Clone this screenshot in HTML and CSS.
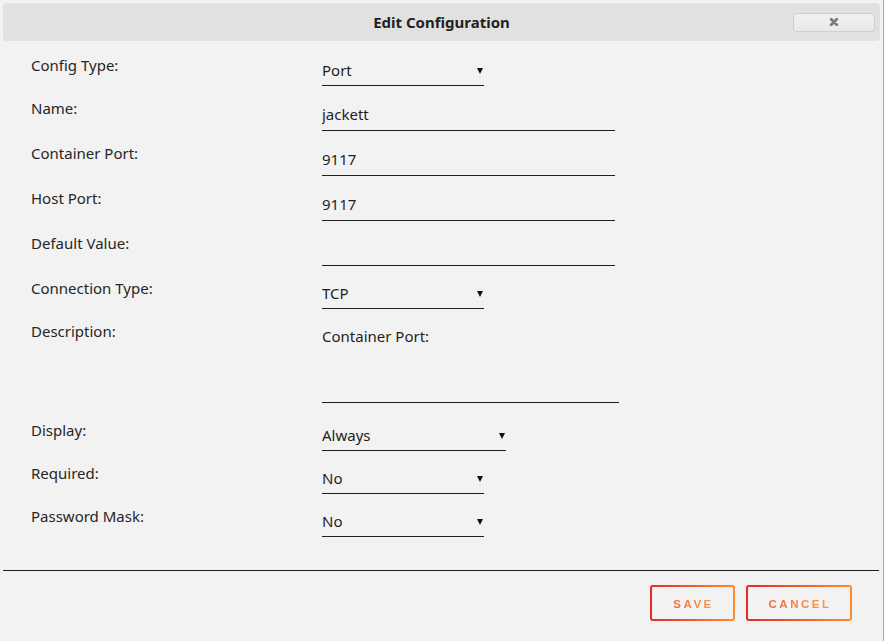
FILE: index.html
```html
<!DOCTYPE html>
<html lang="en">
<head>
    <meta charset="UTF-8">
    <meta name="viewport" content="width=device-width, initial-scale=1.0">
    <title>Edit Configuration</title>
    <link rel="stylesheet" href="styles.css">
</head>
<body>

    <div class="dialog">
        <header class="dialog-title">
            <h1>Edit Configuration</h1>
            <button class="close-btn" type="button">
                <svg width="10" height="10" viewBox="0 0 10 10">
                    <path d="M2.2 2.2 L7.8 7.8 M7.8 2.2 L2.2 7.8" stroke="#7a7a7a" stroke-width="2.8" stroke-linecap="round"/>
                </svg>
            </button>
        </header>

        <form class="config-form">
            <div class="row">
                <label>Config Type:</label>
                <div class="select-wrap short"><select><option>Port</option></select></div>
            </div>
            <div class="row">
                <label>Name:</label>
                <input type="text" value="jackett">
            </div>
            <div class="row">
                <label>Container Port:</label>
                <input type="text" value="9117">
            </div>
            <div class="row">
                <label>Host Port:</label>
                <input type="text" value="9117">
            </div>
            <div class="row">
                <label>Default Value:</label>
                <input type="text" value="">
            </div>
            <div class="row">
                <label>Connection Type:</label>
                <div class="select-wrap short"><select><option>TCP</option></select></div>
            </div>
            <div class="row row-desc">
                <label>Description:</label>
                <textarea>Container Port:</textarea>
            </div>
            <div class="row">
                <label>Display:</label>
                <div class="select-wrap wide"><select><option>Always</option></select></div>
            </div>
            <div class="row">
                <label>Required:</label>
                <div class="select-wrap short"><select><option>No</option></select></div>
            </div>
            <div class="row">
                <label>Password Mask:</label>
                <div class="select-wrap short"><select><option>No</option></select></div>
            </div>
        </form>

        <footer class="dialog-buttons">
            <button type="button" class="grad-btn save-btn"><span>Save</span></button>
            <button type="button" class="grad-btn cancel-btn"><span>Cancel</span></button>
        </footer>
    </div>

</body>
</html>
```

FILE: styles.css
```css
/* Basic Reset */
* {
    margin: 0;
    padding: 0;
    box-sizing: border-box;
}
body {
    font-family: "Noto Sans", "Open Sans", sans-serif;
    background-color: #f2f2f2;
    color: #262626;
}

.dialog {
    width: 884px;
    height: 641px;
    border-right: 1px solid #a8a8a8;
    display: flex;
    flex-direction: column;
}

/* Title bar */
.dialog-title {
    margin: 3px 3px 0 3px;
    height: 38px;
    background-color: #e1e1e1;
    border-radius: 4px;
    display: grid;
    grid-template-columns: 1fr auto 1fr;
    align-items: center;
}
.dialog-title h1 {
    grid-column: 2;
    font-size: 15px;
    font-weight: bold;
    color: #222;
}
.close-btn {
    grid-column: 3;
    justify-self: end;
    margin-right: 5px;
    width: 82px;
    height: 19px;
    background: linear-gradient(#f0f0f0, #e9e9e9);
    border: 1px solid #cfcfcf;
    border-radius: 3px;
    display: flex;
    align-items: center;
    justify-content: center;
}

/* Form */
.config-form {
    padding: 15px 0 0 31px;
    display: flex;
    flex-direction: column;
    gap: 13px;
}
.row {
    display: flex;
    align-items: flex-start;
}
.row label {
    width: 291px;
    font-size: 15px;
    line-height: 19px;
    color: #262626;
}
.row-desc {
    margin-bottom: 5px;
}

.row input,
.row select,
.row textarea {
    font-family: inherit;
    font-size: 15px;
    color: #1e1e1e;
    background: transparent;
    border: none;
    border-bottom: 1px solid #1e1e1e;
    outline: none;
    border-radius: 0;
}
.row input {
    width: 293px;
    height: 32px;
    padding: 0 0 1px 0;
}
.row textarea {
    width: 297px;
    height: 81px;
    padding: 5px 0 0 0;
    line-height: 18px;
    resize: none;
    overflow: hidden;
}

.select-wrap {
    position: relative;
}
.select-wrap select {
    appearance: none;
    -webkit-appearance: none;
    width: 100%;
    height: 30px;
    padding: 0 0 2px 0;
}
.select-wrap::after {
    content: "";
    position: absolute;
    top: 12px;
    right: 1px;
    border-left: 3px solid transparent;
    border-right: 3px solid transparent;
    border-top: 6px solid #111;
    pointer-events: none;
}
.select-wrap.short {
    width: 162px;
}
.select-wrap.wide {
    width: 184px;
}

/* Footer buttons */
.dialog-buttons {
    margin: auto 4px 0 3px;
    height: 71px;
    border-top: 1px solid #1e1e1e;
    display: flex;
    justify-content: flex-end;
    align-items: flex-start;
    gap: 11px;
    padding: 14px 27px 0 0;
}
.grad-btn {
    height: 36px;
    padding: 0 0 0 2px;
    border: 2px solid transparent;
    border-radius: 3px;
    background:
        linear-gradient(#f2f2f2, #f2f2f2) padding-box,
        linear-gradient(90deg, #e22a2a, #ff8c2f) border-box;
    cursor: pointer;
}
.save-btn {
    width: 85px;
}
.cancel-btn {
    width: 106px;
}
.grad-btn span {
    font-family: inherit;
    font-size: 11.5px;
    font-weight: bold;
    letter-spacing: 2.5px;
    text-transform: uppercase;
    background: linear-gradient(90deg, #f06a3a, #ff9a40);
    -webkit-background-clip: text;
    background-clip: text;
    color: transparent;
}
```
